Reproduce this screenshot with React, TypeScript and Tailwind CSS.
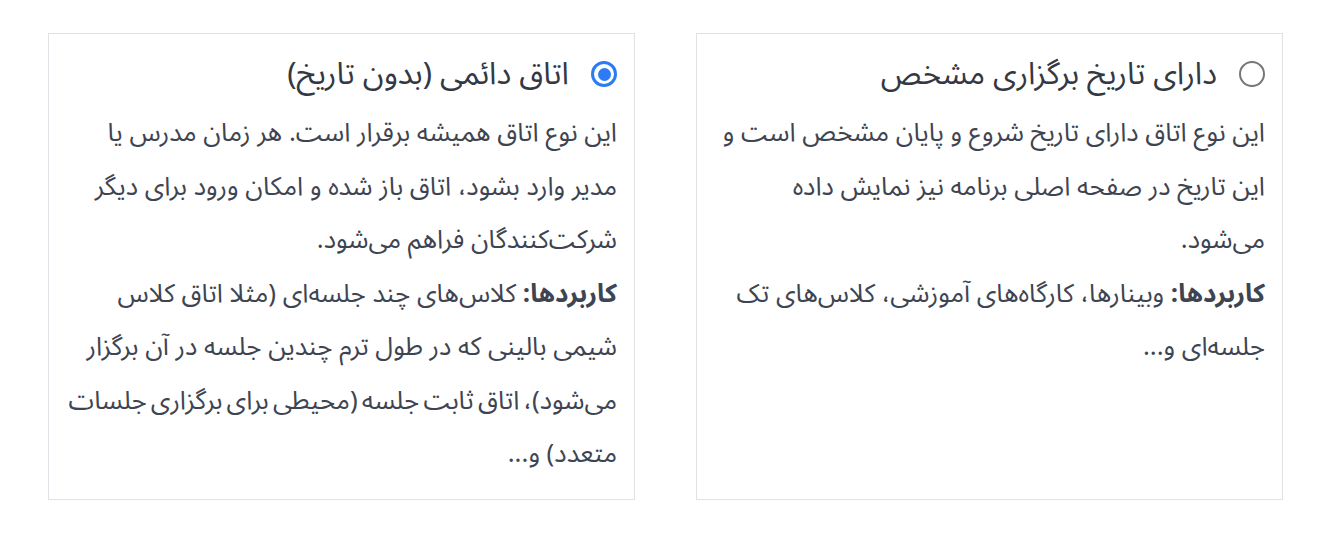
import React from "react";

const font = { fontFamily: '"Noto Sans Arabic", "DejaVu Sans", sans-serif' };

function Radio({ checked }: { checked: boolean }) {
  return checked ? (
    <span className="flex h-[26px] w-[26px] shrink-0 items-center justify-center rounded-full border-[3.5px] border-[#2b7cf4] bg-white">
      <span className="h-[13px] w-[13px] rounded-full bg-[#2b7cf4]" />
    </span>
  ) : (
    <span className="h-[26px] w-[26px] shrink-0 rounded-full border-[2px] border-[#777777] bg-white" />
  );
}

function Card({
  title,
  checked,
  lines,
  width,
}: {
  title: string;
  checked: boolean;
  lines: React.ReactNode[];
  width: string;
}) {
  return (
    <div className={`${width} border border-[#dfe2e6] bg-white pt-[18px] pb-[17px] pr-[17px] pl-[18px]`}>
      <div className="flex items-center gap-[22px]">
        <Radio checked={checked} />
        <div className="text-[31px] leading-[44px] text-[#333842]">{title}</div>
      </div>
      <div className="mt-[11px] text-[25.8px] leading-[53.5px] text-[#3e4451]">
        {lines.map((l, i) => (
          <div key={i} className="whitespace-nowrap">
            {l}
          </div>
        ))}
      </div>
    </div>
  );
}

export default function App() {
  return (
    <div dir="rtl" className="min-h-[546px] w-[1334px] bg-white" style={font}>
      <div className="flex items-stretch gap-[61px] pt-[33px] pr-[51px]">
        <Card
          width="w-[587px]"
          checked={false}
          title="دارای تاریخ برگزاری مشخص"
          lines={[
            "این نوع اتاق دارای تاریخ شروع و پایان مشخص است و",
            "این تاریخ در صفحه اصلی برنامه نیز نمایش داده",
            "می‌شود.",
            <>
              <b className="font-bold">کاربردها:</b> وبینارها، کارگاه‌های آموزشی، کلاس‌های تک
            </>,
            "جلسه‌ای و...",
          ]}
        />
        <Card
          width="w-[587px]"
          checked={true}
          title="اتاق دائمی (بدون تاریخ)"
          lines={[
            "این نوع اتاق همیشه برقرار است. هر زمان مدرس یا",
            "مدیر وارد بشود، اتاق باز شده و امکان ورود برای دیگر",
            "شرکت‌کنندگان فراهم می‌شود.",
            <>
              <b className="font-bold">کاربردها:</b> کلاس‌های چند جلسه‌ای (مثلا اتاق کلاس
            </>,
            "شیمی بالینی که در طول ترم چندین جلسه در آن برگزار",
            <span className="[word-spacing:-2.5px]">می‌شود)، اتاق ثابت جلسه (محیطی برای برگزاری جلسات</span>,
            "متعدد) و...",
          ]}
        />
      </div>
    </div>
  );
}
